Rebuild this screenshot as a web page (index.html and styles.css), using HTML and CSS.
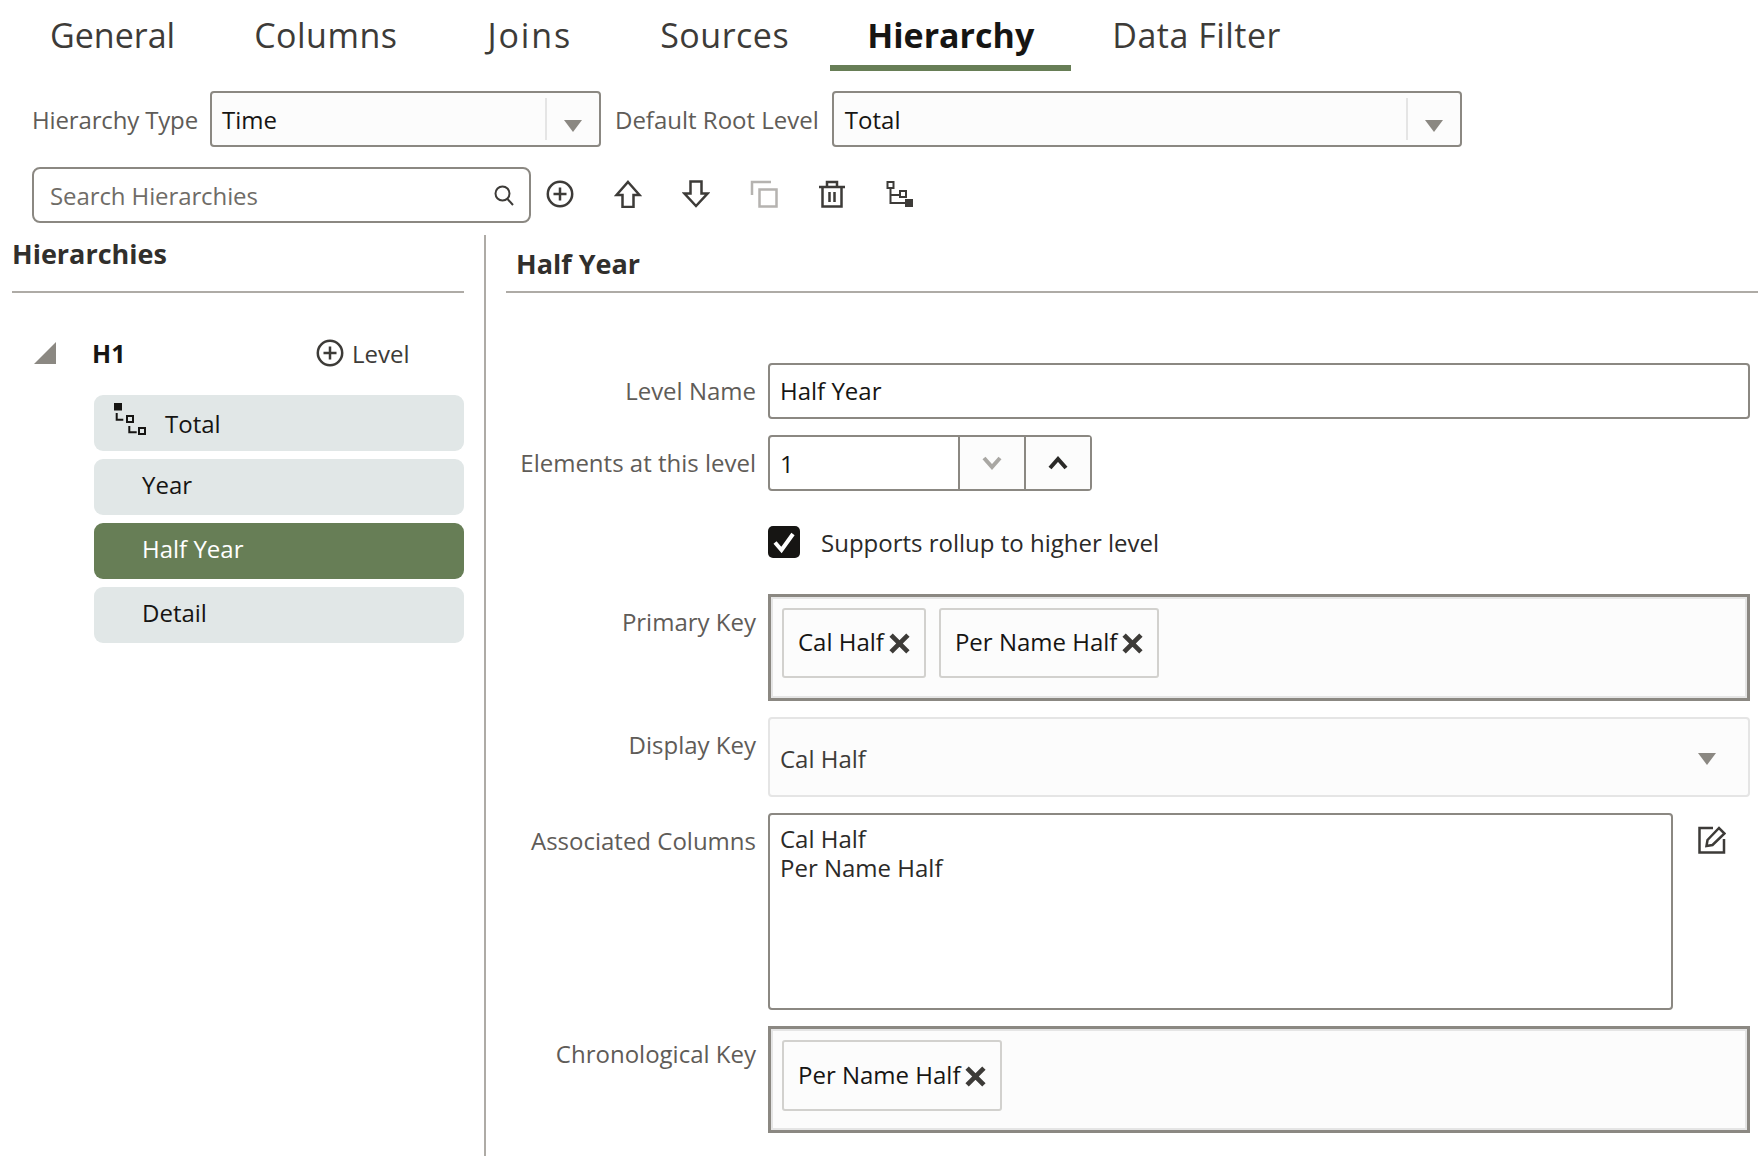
FILE: index.html
```html
<!DOCTYPE html>
<html lang="en">
<head>
  <meta charset="UTF-8" />
  <title>Hierarchy</title>
  <link rel="stylesheet" href="styles.css">
</head>
<body>
  <div class="tabs">
    <div class="tab tab-first">General</div>
    <div class="tab">Columns</div>
    <div class="tab tab-wide">Joins</div>
    <div class="tab">Sources</div>
    <div class="tab active">Hierarchy</div>
    <div class="tab">Data Filter</div>
  </div>

  <div class="type-row">
    <span class="label label-type">Hierarchy Type</span>
    <div class="select select-type">
      <span class="select-text">Time</span>
      <span class="select-divider"></span>
      <span class="arrow"></span>
    </div>
    <span class="label label-root">Default Root Level</span>
    <div class="select select-root">
      <span class="select-text">Total</span>
      <span class="select-divider"></span>
      <span class="arrow"></span>
    </div>
  </div>

  <div class="search-row">
    <div class="search">
      <span class="search-text">Search Hierarchies</span>
      <svg class="search-icon" width="21" height="21" viewBox="0 0 21 21"><circle cx="8.500" cy="8.500" r="7"/><path d="M13.500 14l5.500 6"/></svg>
    </div>
    <div class="toolbar">
      <svg class="icon" width="28" height="28" viewBox="0 0 28 28"><circle cx="14" cy="14" r="12.200"/><path d="M14 7.500v13M7.500 14h13"/></svg>
      <svg class="icon" width="28" height="28" viewBox="0 0 28 28"><path d="M14 2L25.500 15H19.500V27H8.500V15H2.500Z"/></svg>
      <svg class="icon" width="28" height="28" viewBox="0 0 28 28"><path d="M8.500 1.500H19.500V13.500H25.500L14 26L2.500 13.500H8.500Z"/></svg>
      <svg class="icon icon-off" width="28" height="28" viewBox="0 0 28 28"><path d="M2 15V2H21"/><path d="M9.500 9.500H26.500V26.500H9.500Z"/></svg>
      <svg class="icon" width="28" height="28" viewBox="0 0 28 28"><path d="M1 7H27M9 7V2H19V7M4.500 7V26.500H23.500V7M11.500 12V22M16.500 12V22"/></svg>
      <svg class="icon" width="28" height="28" viewBox="0 0 28 28"><path d="M1.500 2H7.500V8H1.500ZM4.500 8V23H19M4.500 15H14M14 11H20V17H14Z" stroke-width="2"/><rect class="icon-fill" x="19" y="19" width="8" height="8"/></svg>
    </div>
  </div>

  <div class="split">
    <div class="tree-panel">
      <div class="tree-title">Hierarchies</div>
      <div class="tree-head">
        <span class="twisty"></span>
        <strong class="tree-name">H1</strong>
        <svg class="icon" width="28" height="28" viewBox="0 0 28 28"><circle cx="14" cy="14" r="12.200"/><path d="M14 7.500v13M7.500 14h13"/></svg>
        <span class="tree-add">Level</span>
      </div>
      <div class="levels">
        <div class="level level-root">
          <svg class="level-icon" width="32" height="32" viewBox="0 0 32 32"><rect class="icon-dark" x="0" y="0" width="8" height="7.500"/><path d="M2.700 10V16.700H9.300M13 13H19V19H13ZM15.300 23V29.300H22.700M25 25H31V31H25Z"/></svg>
          <span>Total</span>
        </div>
        <div class="level">Year</div>
        <div class="level selected">Half Year</div>
        <div class="level">Detail</div>
      </div>
    </div>

    <div class="detail-panel">
      <div class="detail-title">Half Year</div>
      <div class="form">
        <div class="field-label">Level Name</div>
        <div class="input">Half Year</div>

        <div class="field-label">Elements at this level</div>
        <div class="stepper">
          <div class="stepper-value">1</div>
          <div class="stepper-btn"><svg class="chevron chevron-off" width="22" height="16" viewBox="0 0 22 16"><path d="M3 3L11 12L19 3"/></svg></div>
          <div class="stepper-btn"><svg class="chevron" width="22" height="16" viewBox="0 0 22 16"><path d="M3 13L11 4L19 13"/></svg></div>
        </div>

        <div class="check-row">
          <span class="checkbox"><svg width="32" height="32" viewBox="0 0 32 32"><path d="M7 16.500L13.500 24L25 8"/></svg></span>
          <span class="check-text">Supports rollup to higher level</span>
        </div>

        <div class="field-label key-label">Primary Key</div>
        <div class="chips key-box">
          <div class="chip">Cal Half<svg class="chip-x" width="21" height="21" viewBox="0 0 20 20"><path d="M2 2L18 18M18 2L2 18"/></svg></div>
          <div class="chip">Per Name Half<svg class="chip-x" width="21" height="21" viewBox="0 0 20 20"><path d="M2 2L18 18M18 2L2 18"/></svg></div>
        </div>

        <div class="field-label">Display Key</div>
        <div class="display-select">
          <span class="display-text">Cal Half</span>
          <span class="arrow"></span>
        </div>

        <div class="field-label">Associated Columns</div>
        <div class="assoc">
          <div class="textarea">Cal Half<br>Per Name Half</div>
          <svg class="edit-icon" width="28" height="28" viewBox="0 0 28 28"><path d="M15 2H1.500V26.500H26V13"/><path d="M8.500 20L9.500 14L21 2L26.500 7.500L14.500 19Z"/></svg>
        </div>

        <div class="field-label">Chronological Key</div>
        <div class="chips chrono-box">
          <div class="chip">Per Name Half<svg class="chip-x" width="21" height="21" viewBox="0 0 20 20"><path d="M2 2L18 18M18 2L2 18"/></svg></div>
        </div>
      </div>
    </div>
  </div>
</body>
</html>
```

FILE: styles.css
```css
html, body {
  margin: 0;
  padding: 0;
  height: 100%;
  overflow: hidden;
}

body {
  background: white;
  color: #161513;
  font-family: 'Open Sans', sans-serif;
  font-size: 24px;
}

/* Tabs */
.tabs {
  display: flex;
  height: 71px;
  padding-left: 10px;
  box-sizing: border-box;
}

.tab {
  padding: 11px 40px 0;
  font-size: 34px;
  line-height: 48px;
  letter-spacing: 0.5px;
  color: #3d3b38;
}

.tab-first {
  padding-right: 39px;
  letter-spacing: 0;
}

.tab-wide {
  padding: 11px 48px 0 50px;
  letter-spacing: 1.9px;
}

.tab.active {
  padding: 11px 37px 0;
  margin: 0 1px;
  font-weight: 700;
  letter-spacing: 0;
  color: #161513;
  border-bottom: 6px solid #677e56;
}

/* Hierarchy type selects */
.type-row {
  display: flex;
  align-items: center;
  margin-top: 20px;
  padding-left: 32px;
}

.label {
  color: #5f5c58;
}

.label-type {
  letter-spacing: -0.15px;
}

.select {
  display: flex;
  align-items: center;
  height: 56px;
  box-sizing: border-box;
  border: 2px solid #8b8882;
  border-radius: 4px;
  background: #fcfcfc;
  margin-left: 12px;
  padding-left: 10px;
}

.select-type { width: 391px; }
.select-root { width: 630px; margin-left: 13px; padding-left: 11px; }
.label-root { margin-left: 14px; }

.select-text {
  flex: 1;
}

.select-divider {
  width: 2px;
  height: 42px;
  background: #e5e5e5;
}

.arrow {
  width: 0;
  height: 0;
  border-left: 9px solid transparent;
  border-right: 9px solid transparent;
  border-top: 12px solid #8b8882;
}

.select .arrow {
  margin: 14px 17px 0 17px;
}

/* Search and toolbar */
.search-row {
  display: flex;
  align-items: center;
  margin-top: 20px;
  padding-left: 32px;
}

.search {
  display: flex;
  align-items: center;
  justify-content: space-between;
  width: 499px;
  height: 56px;
  box-sizing: border-box;
  border: 2px solid #8b8882;
  border-radius: 8px;
  padding: 0 14px 0 16px;
  color: #6f6c67;
}

.search-text {
  padding-top: 1px;
  letter-spacing: -0.1px;
}

.search-icon {
  fill: none;
  stroke: #3d3b38;
  stroke-width: 2;
}

.toolbar {
  display: flex;
  gap: 40px;
  margin: -3px 0 0 15px;
}

.icon {
  fill: none;
  stroke: #3d3b38;
  stroke-width: 2.5;
  flex: none;
}

.icon-off {
  stroke: #b5b3b0;
}

.icon-fill {
  fill: #3d3b38;
  stroke: none;
}

/* Main split */
.split {
  display: flex;
  margin-top: 12px;
  height: 921px;
}

.tree-panel {
  width: 486px;
  box-sizing: border-box;
  padding: 0 20px 0 12px;
  border-right: 2px solid #aeaba6;
  flex: none;
}

.tree-title {
  height: 58px;
  box-sizing: border-box;
  padding-top: 1px;
  border-bottom: 2px solid #aeaba6;
  font-size: 27px;
  line-height: 36px;
  font-weight: 700;
  color: #312f2c;
}

.tree-head {
  display: flex;
  align-items: center;
  height: 28px;
  margin: 46px 0 0 22px;
}

.twisty {
  width: 0;
  height: 0;
  border-left: 22px solid transparent;
  border-bottom: 22px solid #8b8882;
  margin-right: 36px;
}

.tree-name {
  width: 224px;
  flex: none;
  font-size: 25px;
}

.tree-add {
  margin-left: 8px;
  color: #3d3b38;
}

.levels {
  display: flex;
  flex-direction: column;
  gap: 8px;
  margin: 28px 0 0 82px;
}

.level {
  display: flex;
  align-items: center;
  height: 56px;
  box-sizing: border-box;
  padding: 0 0 6px 48px;
  border-radius: 9px;
  background: #e1e7e7;
}

.level-root {
  padding: 0 0 0 20px;
}

.level-icon {
  fill: none;
  stroke: #161513;
  stroke-width: 2;
  margin: -8px 19px 0 0;
}

.icon-dark {
  fill: #161513;
  stroke: none;
}

.level.selected {
  background: #677e56;
  color: white;
}

/* Detail form */
.detail-panel {
  flex: 1;
  padding-left: 20px;
}

.detail-title {
  height: 58px;
  box-sizing: border-box;
  padding: 11px 0 0 10px;
  border-bottom: 2px solid #aeaba6;
  font-size: 27px;
  line-height: 36px;
  font-weight: 700;
  color: #312f2c;
}

.form {
  display: grid;
  grid-template-columns: 250px 1fr;
  column-gap: 12px;
  row-gap: 16px;
  padding: 70px 8px 0 0;
}

.field-label {
  padding-top: 12px;
  line-height: 32px;
  text-align: right;
  color: #5f5c58;
  white-space: nowrap;
}

.input {
  height: 56px;
  box-sizing: border-box;
  border: 2px solid #8b8882;
  border-radius: 4px;
  padding: 0 10px;
  line-height: 52px;
}

.stepper {
  display: flex;
  width: 324px;
  height: 56px;
  box-sizing: border-box;
  border: 2px solid #8b8882;
  border-radius: 4px;
}

.stepper-value {
  flex: 1;
  padding: 0 10px;
  line-height: 54px;
}

.stepper-btn {
  display: flex;
  align-items: center;
  justify-content: center;
  width: 66px;
  box-sizing: border-box;
  border-left: 2px solid #8b8882;
  background: #fcfcfc;
}

.chevron {
  fill: none;
  stroke: #2b2a28;
  stroke-width: 4;
}

.chevron-off {
  stroke: #a9a7a3;
}

.check-row {
  grid-column: 2;
  display: flex;
  align-items: center;
  height: 32px;
  margin-top: 19px;
}

.checkbox {
  display: flex;
  width: 32px;
  height: 32px;
  border-radius: 5px;
  background: #161513;
}

.checkbox svg {
  fill: none;
  stroke: white;
  stroke-width: 4;
}

.check-text {
  margin-left: 21px;
  padding-top: 2px;
  line-height: 30px;
  color: #2b2a28;
}

.key-label {
  margin-top: 20px;
}

.chips {
  display: flex;
  gap: 13px;
  height: 107px;
  box-sizing: border-box;
  border: 3px solid #8b8882;
  outline: 2px solid #e5e5e5;
  outline-offset: -5px;
  background: #fcfcfc;
  padding: 11px;
}

.key-box {
  margin-top: 20px;
}

.chip {
  display: flex;
  align-items: center;
  height: 70px;
  box-sizing: border-box;
  padding: 0 14px 3px;
  border: 2px solid #d2d1ce;
  border-radius: 3px;
  background: #fcfcfc;
}

.chrono-box .chip {
  height: 71px;
  padding-bottom: 2px;
}

.chip-x {
  margin: 3px 0 0 5px;
  fill: none;
  stroke: #3d3b38;
  stroke-width: 4.500;
}

.display-select {
  display: flex;
  align-items: center;
  justify-content: space-between;
  height: 80px;
  box-sizing: border-box;
  border: 2px solid #e5e5e5;
  border-radius: 4px;
  background: #fcfcfc;
  padding: 0 32px 0 10px;
  color: #3d3b38;
}

.display-text {
  padding-top: 2px;
}

.display-select .arrow {
  margin-top: 4px;
}

.assoc {
  display: flex;
}

.textarea {
  width: 905px;
  height: 197px;
  box-sizing: border-box;
  border: 2px solid #8b8882;
  border-radius: 4px;
  padding: 9px 10px;
  line-height: 29px;
  color: #2b2a28;
}

.edit-icon {
  margin: 13px 0 0 25px;
  fill: none;
  stroke: #3d3b38;
  stroke-width: 2.5;
}
```
